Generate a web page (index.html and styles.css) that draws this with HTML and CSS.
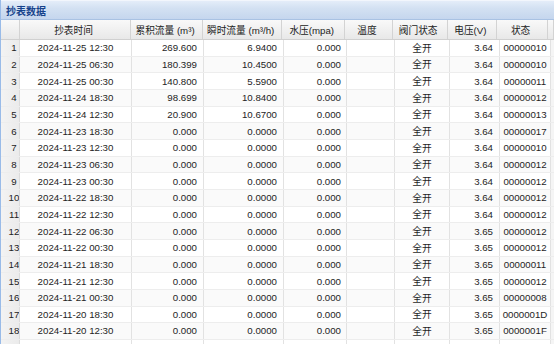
FILE: index.html
```html
<!DOCTYPE html>
<html lang="zh">
<head>
<meta charset="utf-8">
<title>抄表数据</title>
<link rel="stylesheet" href="styles.css">
</head>
<body>
<div class="panel">
  <div class="panel-title">抄表数据</div>
  <div class="grid">
    <div class="hrow">
      <div class="c c0"></div>
      <div class="c c1">抄表时间</div>
      <div class="c c2">累积流量 (m³)</div>
      <div class="c c3">瞬时流量 (m³/h)</div>
      <div class="c c4">水压(mpa)</div>
      <div class="c c5">温度</div>
      <div class="c c6">阀门状态</div>
      <div class="c c7">电压(V)</div>
      <div class="c c8">状态</div>
      <div class="c c9"></div>
    </div>
    <div class="body">
      <div class="row"><div class="c c0">1</div><div class="c c1">2024-11-25 12:30</div><div class="c c2">269.600</div><div class="c c3">6.9400</div><div class="c c4">0.000</div><div class="c c5"></div><div class="c c6">全开</div><div class="c c7">3.64</div><div class="c c8">00000010</div><div class="c c9"></div></div>
      <div class="row"><div class="c c0">2</div><div class="c c1">2024-11-25 06:30</div><div class="c c2">180.399</div><div class="c c3">10.4500</div><div class="c c4">0.000</div><div class="c c5"></div><div class="c c6">全开</div><div class="c c7">3.64</div><div class="c c8">00000010</div><div class="c c9"></div></div>
      <div class="row"><div class="c c0">3</div><div class="c c1">2024-11-25 00:30</div><div class="c c2">140.800</div><div class="c c3">5.5900</div><div class="c c4">0.000</div><div class="c c5"></div><div class="c c6">全开</div><div class="c c7">3.64</div><div class="c c8">00000011</div><div class="c c9"></div></div>
      <div class="row"><div class="c c0">4</div><div class="c c1">2024-11-24 18:30</div><div class="c c2">98.699</div><div class="c c3">10.8400</div><div class="c c4">0.000</div><div class="c c5"></div><div class="c c6">全开</div><div class="c c7">3.64</div><div class="c c8">00000012</div><div class="c c9"></div></div>
      <div class="row"><div class="c c0">5</div><div class="c c1">2024-11-24 12:30</div><div class="c c2">20.900</div><div class="c c3">10.6700</div><div class="c c4">0.000</div><div class="c c5"></div><div class="c c6">全开</div><div class="c c7">3.64</div><div class="c c8">00000013</div><div class="c c9"></div></div>
      <div class="row"><div class="c c0">6</div><div class="c c1">2024-11-23 18:30</div><div class="c c2">0.000</div><div class="c c3">0.0000</div><div class="c c4">0.000</div><div class="c c5"></div><div class="c c6">全开</div><div class="c c7">3.64</div><div class="c c8">00000017</div><div class="c c9"></div></div>
      <div class="row"><div class="c c0">7</div><div class="c c1">2024-11-23 12:30</div><div class="c c2">0.000</div><div class="c c3">0.0000</div><div class="c c4">0.000</div><div class="c c5"></div><div class="c c6">全开</div><div class="c c7">3.64</div><div class="c c8">00000010</div><div class="c c9"></div></div>
      <div class="row"><div class="c c0">8</div><div class="c c1">2024-11-23 06:30</div><div class="c c2">0.000</div><div class="c c3">0.0000</div><div class="c c4">0.000</div><div class="c c5"></div><div class="c c6">全开</div><div class="c c7">3.64</div><div class="c c8">00000012</div><div class="c c9"></div></div>
      <div class="row"><div class="c c0">9</div><div class="c c1">2024-11-23 00:30</div><div class="c c2">0.000</div><div class="c c3">0.0000</div><div class="c c4">0.000</div><div class="c c5"></div><div class="c c6">全开</div><div class="c c7">3.64</div><div class="c c8">00000012</div><div class="c c9"></div></div>
      <div class="row"><div class="c c0">10</div><div class="c c1">2024-11-22 18:30</div><div class="c c2">0.000</div><div class="c c3">0.0000</div><div class="c c4">0.000</div><div class="c c5"></div><div class="c c6">全开</div><div class="c c7">3.64</div><div class="c c8">00000012</div><div class="c c9"></div></div>
      <div class="row"><div class="c c0">11</div><div class="c c1">2024-11-22 12:30</div><div class="c c2">0.000</div><div class="c c3">0.0000</div><div class="c c4">0.000</div><div class="c c5"></div><div class="c c6">全开</div><div class="c c7">3.64</div><div class="c c8">00000012</div><div class="c c9"></div></div>
      <div class="row"><div class="c c0">12</div><div class="c c1">2024-11-22 06:30</div><div class="c c2">0.000</div><div class="c c3">0.0000</div><div class="c c4">0.000</div><div class="c c5"></div><div class="c c6">全开</div><div class="c c7">3.65</div><div class="c c8">00000012</div><div class="c c9"></div></div>
      <div class="row"><div class="c c0">13</div><div class="c c1">2024-11-22 00:30</div><div class="c c2">0.000</div><div class="c c3">0.0000</div><div class="c c4">0.000</div><div class="c c5"></div><div class="c c6">全开</div><div class="c c7">3.65</div><div class="c c8">00000012</div><div class="c c9"></div></div>
      <div class="row"><div class="c c0">14</div><div class="c c1">2024-11-21 18:30</div><div class="c c2">0.000</div><div class="c c3">0.0000</div><div class="c c4">0.000</div><div class="c c5"></div><div class="c c6">全开</div><div class="c c7">3.65</div><div class="c c8">00000011</div><div class="c c9"></div></div>
      <div class="row"><div class="c c0">15</div><div class="c c1">2024-11-21 12:30</div><div class="c c2">0.000</div><div class="c c3">0.0000</div><div class="c c4">0.000</div><div class="c c5"></div><div class="c c6">全开</div><div class="c c7">3.65</div><div class="c c8">00000012</div><div class="c c9"></div></div>
      <div class="row"><div class="c c0">16</div><div class="c c1">2024-11-21 00:30</div><div class="c c2">0.000</div><div class="c c3">0.0000</div><div class="c c4">0.000</div><div class="c c5"></div><div class="c c6">全开</div><div class="c c7">3.65</div><div class="c c8">00000008</div><div class="c c9"></div></div>
      <div class="row"><div class="c c0">17</div><div class="c c1">2024-11-20 18:30</div><div class="c c2">0.000</div><div class="c c3">0.0000</div><div class="c c4">0.000</div><div class="c c5"></div><div class="c c6">全开</div><div class="c c7">3.65</div><div class="c c8">0000001D</div><div class="c c9"></div></div>
      <div class="row"><div class="c c0">18</div><div class="c c1">2024-11-20 12:30</div><div class="c c2">0.000</div><div class="c c3">0.0000</div><div class="c c4">0.000</div><div class="c c5"></div><div class="c c6">全开</div><div class="c c7">3.65</div><div class="c c8">0000001F</div><div class="c c9"></div></div>
      <div class="row"><div class="c c0"></div><div class="c c1"></div><div class="c c2"></div><div class="c c3"></div><div class="c c4"></div><div class="c c5"></div><div class="c c6"></div><div class="c c7"></div><div class="c c8"></div><div class="c c9"></div></div>
    </div>
  </div>
</div>
</body>
</html>
```

FILE: styles.css
```css
html, body {
  margin: 0;
  padding: 0;
  background: #ffffff;
}
body {
  font-family: "Liberation Sans", "Noto Sans CJK SC", sans-serif;
  font-size: 9.7px;
  color: #1e1e1e;
}
.panel {
  width: 554px;
  height: 344px;
  overflow: hidden;
  box-sizing: border-box;
  border-left: 1px solid #99bbe8;
}
.panel-title {
  height: 20px;
  box-sizing: border-box;
  padding-left: 5px;
  display: flex;
  align-items: center;
  font-weight: bold;
  font-size: 10px;
  color: #15428b;
  background: linear-gradient(#e4edf9 0%, #d3e1f2 40%, #c5d6ee 100%);
  border-top: 1px solid #f2f6fc;
  border-bottom: 1px solid #a9c2e3;
}
.grid {
  display: flex;
  flex-direction: column;
}
.hrow, .row {
  display: flex;
}
.hrow {
  height: 20px;
  background: linear-gradient(#f9f9f9, #e8e8e8);
  border-bottom: 1px solid #d0d0d0;
  box-sizing: border-box;
}
.row {
  height: 16.667px;
  box-sizing: border-box;
  border-bottom: 1px solid #ededed;
}
.row:nth-child(even) {
  background: #fafafa;
}
.c {
  box-sizing: border-box;
  display: flex;
  align-items: center;
  white-space: nowrap;
  overflow: hidden;
  border-right: 1px solid #e2e2e2;
}
.hrow .c {
  justify-content: center;
  padding: 0 4px 0 1px;
  color: #222;
  border-right: 1px solid #d3d3d3;
}
.c0 { width: 19px; }
.c1 { width: 112px; }
.c2 { width: 72px; }
.c3 { width: 80px; }
.c4 { width: 63px; }
.c5 { width: 48px; }
.c6 { width: 55px; }
.c7 { width: 50px; }
.c8 { width: 51px; }
.c9 { flex: 1; border-right: none; }

.row .c0 {
  justify-content: center;
  padding-left: 8px;
  background: linear-gradient(90deg, #f3f3f3, #ebebeb);
  border-right: 1px solid #dcdcdc;
  color: #222;
}
.hrow .c0 {
  padding: 0;
}
.row .c1,
.row .c6,
.row .c8 {
  justify-content: center;
}
.row .c2,
.row .c3,
.row .c4,
.row .c7 {
  justify-content: flex-end;
  padding-right: 6px;
}
.row .c4 {
  padding-right: 5px;
}
.row .c9 {
  background: #f5f5f5;
}
```
